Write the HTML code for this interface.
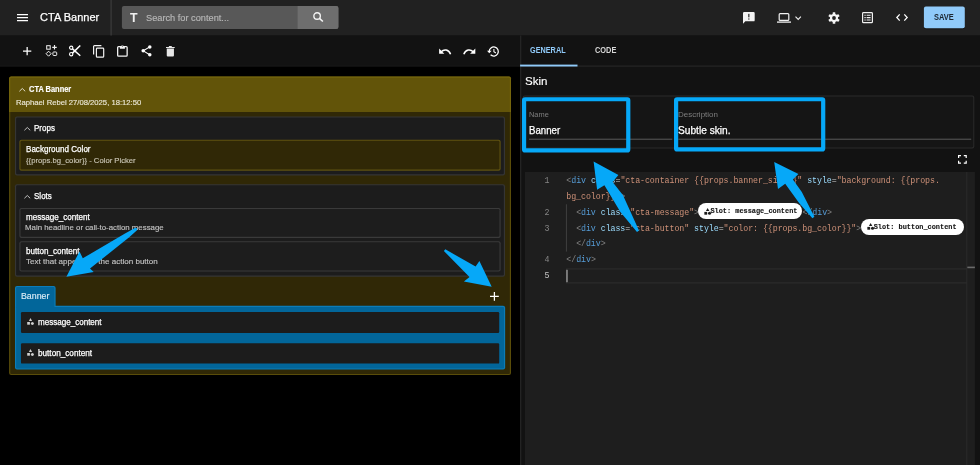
<!DOCTYPE html>
<html lang="en">
<head>
<meta charset="utf-8">
<title>CTA Banner</title>
<style>
*{box-sizing:border-box;margin:0;padding:0}
html,body{width:980px;height:465px;overflow:hidden;background:#121212}
body{position:relative;font-family:"Liberation Sans",sans-serif;color:#fff}
#root{position:absolute;left:0;top:0;width:980px;height:465px;will-change:transform}
.t{position:absolute;white-space:nowrap;line-height:1;transform-origin:0 85%}
svg{position:absolute;overflow:visible}
.code{position:absolute;white-space:pre;font-family:"Liberation Mono",monospace;font-size:8.300px;letter-spacing:-0.065px;line-height:16px;height:16px;color:#d4d4d4}
.code .p{color:#808080}.code .tg{color:#569cd6}.code .a{color:#9cdcfe}.code .s{color:#ce9178}
.pill{position:absolute;background:#fff;border-radius:9px}
.pill span{position:absolute;white-space:nowrap;font-family:"Liberation Mono",monospace;font-weight:bold;font-size:6.92px;line-height:1;color:#141414;-webkit-text-stroke:0.12px #141414}
</style>
</head>
<body>
<div id="root">

<svg style="left:0;top:0" width="980" height="465" viewBox="0 0 980 465">
<rect x="0.00" y="0.00" width="980.00" height="35.55" fill="#212121"/>
<rect x="0.00" y="35.55" width="980.00" height="31.15" fill="#121212"/>
<rect x="0.00" y="65.60" width="520.30" height="1.10" fill="#1b1b1b"/>
<rect x="0.00" y="66.70" width="520.30" height="398.30" fill="#000"/>
<rect x="520.30" y="66.50" width="459.70" height="398.50" fill="#121212"/>
<rect x="110.50" y="0.00" width="1.20" height="35.55" fill="#3c3c3c"/>
<rect x="121.90" y="5.90" width="216.50" height="23.10" rx="2" fill="#585858"/>
<path d="M297.6 5.9h38.8a2 2 0 0 1 2 2v19.1a2 2 0 0 1-2 2h-38.8z" fill="#6e6e6e"/>
<rect x="923.90" y="7.20" width="40.90" height="22.00" rx="2.5" fill="#141414"/>
<rect x="923.90" y="6.60" width="40.90" height="21.70" rx="2" fill="#90caf9"/>
<rect x="520.25" y="35.55" width="1.00" height="429.45" fill="#2b2b2b"/>
<rect x="521.25" y="65.60" width="458.75" height="0.95" fill="#2c2c2c"/>
<rect x="520.10" y="64.60" width="57.40" height="1.90" fill="#90caf9"/>
<rect x="9.10" y="76.50" width="501.90" height="298.60" rx="2" fill="#5a4d09"/>
<rect x="10.25" y="77.65" width="499.60" height="296.30" rx="1" fill="#302806"/>
<path d="M9.1 111.9V78.5a2 2 0 0 1 2-2h497.9a2 2 0 0 1 2 2v33.4z" fill="#75650c"/>
<path d="M10.25 111.9V78.65a1 1 0 0 1 1-1h497.6a1 1 0 0 1 1 1v33.25z" fill="#625409"/>
<rect x="14.95" y="116.45" width="490.05" height="59.05" rx="2" fill="#353535"/><rect x="16.10" y="117.60" width="487.75" height="56.75" rx="1.31" fill="#1c1c1c"/>
<rect x="19.35" y="139.70" width="481.30" height="30.95" rx="2" fill="#5f5210"/><rect x="20.50" y="140.85" width="479.00" height="28.65" rx="1.31" fill="#302806"/>
<rect x="14.95" y="184.20" width="490.05" height="92.55" rx="2" fill="#353535"/><rect x="16.10" y="185.35" width="487.75" height="90.25" rx="1.31" fill="#1c1c1c"/>
<rect x="19.35" y="207.90" width="481.30" height="30.10" rx="2" fill="#3a3a3a"/><rect x="20.50" y="209.05" width="479.00" height="27.80" rx="1.31" fill="#1d1d1d"/>
<rect x="19.35" y="241.20" width="481.30" height="30.40" rx="2" fill="#3a3a3a"/><rect x="20.50" y="242.35" width="479.00" height="28.10" rx="1.31" fill="#1d1d1d"/>
<path d="M15 308V287.9a2 2 0 0 1 2-2h36.6a2 2 0 0 1 2 2V308z" fill="#0b7cb8"/>
<rect x="15.00" y="305.80" width="490.15" height="63.75" rx="2" fill="#0b7cb8"/>
<path d="M16.15 308V288.05a1 1 0 0 1 1-1h36.3a1 1 0 0 1 1 1V308z" fill="#02669a"/>
<rect x="16.15" y="306.95" width="487.85" height="61.45" rx="1" fill="#02669a"/>
<rect x="20.97" y="312.10" width="478.23" height="20.90" rx="1.2" fill="#1c1c1c"/>
<rect x="20.97" y="343.30" width="478.23" height="20.30" rx="1.2" fill="#1c1c1c"/>
<rect x="522.60" y="95.50" width="451.70" height="52.90" rx="2" fill="#2a2a2a"/><rect x="523.60" y="96.50" width="449.70" height="50.90" rx="1.4" fill="#151515"/>
<rect x="529.00" y="138.70" width="143.30" height="1.00" fill="#5a5a5a"/>
<rect x="678.40" y="138.70" width="292.80" height="1.00" fill="#5a5a5a"/>
<rect x="525.00" y="172.00" width="449.90" height="293.00" fill="#1e1e1e"/>
<rect x="966.40" y="172.00" width="0.90" height="293.00" fill="#2d2d2d"/>
<rect x="566.00" y="268.40" width="400.90" height="15.00" fill="#2e2e2e"/>
<rect x="567.00" y="269.40" width="399.40" height="13.00" fill="#1e1e1e"/>
<rect x="967.30" y="266.60" width="7.60" height="1.60" fill="#6a6a6a"/>
<rect x="565.90" y="204.30" width="1.00" height="47.30" fill="#404040"/>
<rect x="566.50" y="269.80" width="1.00" height="12.40" fill="#c8c8c8"/>
</svg>
<!-- APP BAR -->
<svg style="left:16.5px;top:14px" width="11" height="7.4" viewBox="0 0 11 7.4"><path d="M0 0.65h11M0 3.7h11M0 6.75h11" stroke="#fff" stroke-width="1.25" fill="none"/></svg>
<svg style="left:312.7px;top:11.9px" width="10.4" height="10" viewBox="0 0 10.4 10"><circle cx="4.1" cy="4" r="3.25" stroke="#f4f4f4" stroke-width="1.35" fill="none"/><path d="M6.5 6.3L9.9 9.5" stroke="#f4f4f4" stroke-width="1.6"/></svg>

<svg style="left:742.6px;top:11.6px" width="11.7" height="11.7" viewBox="0 0 12 12"><path d="M1.2 0h9.6a1.2 1.2 0 0 1 1.2 1.2v7.2a1.2 1.2 0 0 1-1.2 1.2H2.4L0 12V1.2a1.2 1.2 0 0 1 1.2-1.2z" fill="#f2f2f2"/><rect x="5.4" y="1.9" width="1.2" height="3.6" fill="#212121"/><rect x="5.4" y="6.6" width="1.2" height="1.2" fill="#212121"/></svg>
<svg style="left:777.2px;top:12.9px" width="14" height="10" viewBox="0 0 14 10"><rect x="2.2" y="0.6" width="9.6" height="6.8" rx="0.9" stroke="#f2f2f2" stroke-width="1.2" fill="none"/><path d="M0 9.1h14" stroke="#f2f2f2" stroke-width="1.3"/></svg>
<svg style="left:795px;top:15.9px" width="6.4" height="4.3" viewBox="0 0 6.4 4.3"><path d="M0.5 0.6L3.2 3.4L5.9 0.6" stroke="#f2f2f2" stroke-width="1.1" fill="none"/></svg>
<svg style="left:827.5px;top:11.6px" width="12" height="12" viewBox="0 0 12 12"><g fill="#f5f5f5"><circle cx="6" cy="6" r="4.1"/><rect x="4.7" y="0.2" width="2.6" height="11.6" rx="0.5"/><rect x="4.7" y="0.2" width="2.6" height="11.6" rx="0.5" transform="rotate(60 6 6)"/><rect x="4.7" y="0.2" width="2.6" height="11.6" rx="0.5" transform="rotate(120 6 6)"/></g><circle cx="6" cy="6" r="1.9" fill="#212121"/></svg>
<svg style="left:862.3px;top:11.9px" width="11" height="11.3" viewBox="0 0 11 11.3"><rect x="0.6" y="0.6" width="9.8" height="10.1" rx="0.9" stroke="#f2f2f2" stroke-width="1.2" fill="none"/><path d="M2.4 3.3h1.3M4.6 3.3h4M2.4 5.65h1.3M4.6 5.65h4M2.4 8h1.3M4.6 8h4" stroke="#f2f2f2" stroke-width="1.1"/></svg>
<svg style="left:895.8px;top:14.3px" width="12" height="7" viewBox="0 0 12 7"><path d="M3.7 0.4L0.8 3.5L3.7 6.6M8.3 0.4L11.2 3.5L8.3 6.6" stroke="#fff" stroke-width="1.25" fill="none"/></svg>

<!-- TOOLBAR ICONS -->
<svg style="left:23px;top:47px" width="8.3" height="8.3" viewBox="0 0 8.3 8.3"><path d="M4.15 0v8.3M0 4.15h8.3" stroke="#fff" stroke-width="1.25"/></svg>
<svg style="left:45.9px;top:45.2px" width="11.4" height="11.2" viewBox="0 0 11.4 11.2"><rect x="0.7" y="0.7" width="3.5" height="3.5" stroke="#f2f2f2" stroke-width="1" fill="none"/><rect x="6.9" y="7" width="3.8" height="3.5" rx="0.8" stroke="#f2f2f2" stroke-width="1" fill="none"/><path d="M2.6 6.2L5.1 8.7L2.6 11.2L0.1 8.7z" stroke="#f2f2f2" stroke-width="1" fill="none"/><path d="M8.5 0.1v4.5M6.25 2.35h4.5" stroke="#f2f2f2" stroke-width="1.15"/></svg>
<svg style="left:68.9px;top:45.2px" width="11.6" height="11.4" viewBox="0 0 11.6 11.4"><circle cx="2.2" cy="2.8" r="1.65" stroke="#fff" stroke-width="1.15" fill="none"/><circle cx="2.2" cy="9.2" r="1.65" stroke="#fff" stroke-width="1.15" fill="none"/><path d="M3.5 3.9L11.3 10.7M3.5 8.1L11.3 0.5" stroke="#fff" stroke-width="1.5"/></svg>
<svg style="left:92.8px;top:44.5px" width="11.3" height="12.7" viewBox="0 0 11.3 12.7"><rect x="3.4" y="3.1" width="7.3" height="9" rx="0.9" stroke="#f2f2f2" stroke-width="1.2" fill="none"/><path d="M0.6 9.6V1.5a0.9 0.9 0 0 1 0.9-0.9h6.9" stroke="#f2f2f2" stroke-width="1.2" fill="none"/></svg>
<svg style="left:117.2px;top:44px" width="10.8" height="12.9" viewBox="0 0 10.8 12.9"><rect x="0.65" y="2.6" width="9.5" height="9.6" rx="0.9" stroke="#f2f2f2" stroke-width="1.3" fill="none"/><path d="M2.9 2.1h1.3a1.25 1.25 0 0 1 2.4 0h1.3v2.6H2.9z" fill="#f2f2f2"/><circle cx="5.4" cy="2" r="0.55" fill="#121212"/></svg>
<svg style="left:140.7px;top:45.2px" width="11" height="11.7" viewBox="0 0 11 11.7"><path d="M8.7 1.9L2.3 5.85L8.7 9.8" stroke="#fff" stroke-width="1.1" fill="none"/><circle cx="8.8" cy="1.9" r="1.75" fill="#fff"/><circle cx="2.2" cy="5.85" r="1.75" fill="#fff"/><circle cx="8.8" cy="9.8" r="1.75" fill="#fff"/></svg>
<svg style="left:165.9px;top:45.7px" width="8.7" height="10.4" viewBox="0 0 8.7 10.4"><path d="M0.75 2.6h7.2v6.8a1 1 0 0 1-1 1H1.75a1 1 0 0 1-1-1z" fill="#e6e6e6"/><path d="M0 0.9h8.7v1.1H0z M2.9 0h2.9v1.1H2.9z" fill="#e6e6e6"/></svg>
<svg style="left:439px;top:47.5px" width="12.4" height="6.8" viewBox="0 0 12.4 6.8"><path d="M2.2 3.7C5 0.9 9.6 1.3 11.6 6.2" stroke="#fff" stroke-width="1.5" fill="none"/><path d="M0.1 0.5v5.2h5.2z" fill="#fff"/></svg>
<svg style="left:462.7px;top:47.5px" width="12.4" height="6.8" viewBox="0 0 12.4 6.8"><path d="M10.2 3.7C7.4 0.9 2.8 1.3 0.8 6.2" stroke="#fff" stroke-width="1.5" fill="none"/><path d="M12.3 0.5v5.2H7.1z" fill="#fff"/></svg>
<svg style="left:486.9px;top:45.5px" width="12.3" height="11" viewBox="0 0 12.3 11"><path d="M2.2 5.5a4.55 4.55 0 1 1 1.4 3.3" stroke="#fff" stroke-width="1.25" fill="none"/><path d="M0 4.7h4.6L2.3 7.3z" fill="#fff"/><path d="M6.9 3v2.8l2 1.2" stroke="#fff" stroke-width="1.05" fill="none"/></svg>

<!-- TABS -->

<!-- LEFT TREE -->
<svg style="left:18.9px;top:87.6px" width="6.6" height="3.6" viewBox="0 0 6.6 3.6"><path d="M0.4 3.3L3.3 0.5L6.2 3.3" stroke="#e8e4d0" stroke-width="0.95" fill="none"/></svg>

<svg style="left:24px;top:127px" width="6.6" height="3.6" viewBox="0 0 6.6 3.6"><path d="M0.4 3.3L3.3 0.5L6.2 3.3" stroke="#c8c8c8" stroke-width="0.95" fill="none"/></svg>

<svg style="left:24px;top:195px" width="6.6" height="3.6" viewBox="0 0 6.6 3.6"><path d="M0.4 3.3L3.3 0.5L6.2 3.3" stroke="#c8c8c8" stroke-width="0.95" fill="none"/></svg>

<svg style="left:27.2px;top:318.4px" width="7" height="7.2" viewBox="0 0 7 7.2"><path d="M3.5 0.1L5.1 3H1.9z" fill="#cfcfcf"/><rect x="0.2" y="4" width="2.7" height="2.7" fill="#cfcfcf"/><circle cx="5.4" cy="5.4" r="1.5" fill="#cfcfcf"/></svg>
<svg style="left:27.2px;top:349.2px" width="7" height="7.2" viewBox="0 0 7 7.2"><path d="M3.5 0.1L5.1 3H1.9z" fill="#cfcfcf"/><rect x="0.2" y="4" width="2.7" height="2.7" fill="#cfcfcf"/><circle cx="5.4" cy="5.4" r="1.5" fill="#cfcfcf"/></svg>
<svg style="left:490.4px;top:292px" width="8.8" height="8.8" viewBox="0 0 8.8 8.8"><path d="M4.4 0v8.8M0 4.4h8.8" stroke="#fff" stroke-width="1.25"/></svg>

<!-- RIGHT PANEL -->
<svg style="left:958.3px;top:155.4px" width="8.8" height="8.8" viewBox="0 0 8.8 8.8"><path d="M0.6 3V0.6H3M5.8 0.6h2.4V3M8.2 5.8v2.4H5.8M3 8.2H0.6V5.8" stroke="#fff" stroke-width="1.2" fill="none"/></svg>

<!-- CODE EDITOR -->
<div class="code" style="left:544.40px;top:172.82px;color:#858585">1</div>
<div class="code" style="left:544.40px;top:204.52px;color:#858585">2</div>
<div class="code" style="left:544.40px;top:220.82px;color:#858585">3</div>
<div class="code" style="left:544.40px;top:251.92px;color:#858585">4</div>
<div class="code" style="left:544.40px;top:267.72px;color:#c6c6c6">5</div>
<div class="code" style="left:566.30px;top:172.82px"><span class="p">&lt;</span><span class="tg">div</span> <span class="a">class</span>=<span class="s">"cta-container {{props.banner_size}}"</span> <span class="a">style</span>=<span class="s">"background: {{props.</span></div>
<div class="code" style="left:566.30px;top:188.62px"><span class="s">bg_color}}"</span><span class="p">&gt;</span></div>
<div class="code" style="left:566.30px;top:204.52px">  <span class="p">&lt;</span><span class="tg">div</span> <span class="a">class</span>=<span class="s">"cta-message"</span><span class="p">&gt;</span></div>
<div class="code" style="left:802.50px;top:204.52px"><span class="p">&lt;/</span><span class="tg">div</span><span class="p">&gt;</span></div>
<div class="code" style="left:566.30px;top:220.82px">  <span class="p">&lt;</span><span class="tg">div</span> <span class="a">class</span>=<span class="s">"cta-button"</span> <span class="a">style</span>=<span class="s">"color: {{props.bg_color}}"</span><span class="p">&gt;</span></div>
<div class="code" style="left:566.30px;top:236.12px">  <span class="p">&lt;/</span><span class="tg">div</span><span class="p">&gt;</span></div>
<div class="code" style="left:566.30px;top:251.92px"><span class="p">&lt;/</span><span class="tg">div</span><span class="p">&gt;</span></div>
<div class="pill" style="left:698.4px;top:202.9px;width:103.6px;height:16.1px"><span style="left:12.0px;top:5.49px">Slot: message_content</span></div><svg style="left:704.1px;top:207.8px" width="7.3" height="7" viewBox="0 0 7 7"><path d="M3.5 0L5.2 2.9H1.8z" fill="#1c1c1c"/><rect x="0.2" y="3.9" width="2.8" height="2.8" fill="#1c1c1c"/><circle cx="5.4" cy="5.3" r="1.55" fill="#1c1c1c"/></svg>
<div class="pill" style="left:860.5px;top:218.7px;width:103.5px;height:16.2px"><span style="left:13.2px;top:4.89px">Slot: button_content</span></div><svg style="left:867.4px;top:223.0px" width="7.3" height="7" viewBox="0 0 7 7"><path d="M3.5 0L5.2 2.9H1.8z" fill="#1c1c1c"/><rect x="0.2" y="3.9" width="2.8" height="2.8" fill="#1c1c1c"/><circle cx="5.4" cy="5.3" r="1.55" fill="#1c1c1c"/></svg>

<div class="t" style="left:39.56px;top:12.35px;font-size:11.4px;color:#fff;-webkit-text-stroke:0.25px currentColor;transform:scale(0.9682,1)">CTA Banner</div>
<div class="t" style="left:130.25px;top:11.84px;font-size:12px;color:#f0f0f0;font-weight:bold;transform:scale(1.0265,1)">T</div>
<div class="t" style="left:145.58px;top:14.13px;font-size:9.3px;color:#b8b8b8;-webkit-text-stroke:0.14px currentColor;transform:scale(0.9921,1)">Search for content...</div>
<div class="t" style="left:934.15px;top:14.06px;font-size:8.2px;color:#1c2630;font-weight:bold;transform:scale(0.9113,1)">SAVE</div>
<div class="t" style="left:530.45px;top:47.06px;font-size:8.2px;color:#90caf9;font-weight:bold;transform:scale(0.8887,1)">GENERAL</div>
<div class="t" style="left:595.18px;top:47.06px;font-size:8.2px;color:#d6d6d6;font-weight:bold;transform:scale(0.9042,1)">CODE</div>
<div class="t" style="left:28.60px;top:86.06px;font-size:8.2px;color:#fff;font-weight:bold;-webkit-text-stroke:0.15px currentColor;transform:scale(0.9105,1)">CTA Banner</div>
<div class="t" style="left:15.62px;top:98.57px;font-size:7.6px;color:#ebe7d6;-webkit-text-stroke:0.14px currentColor;transform:scale(1.0086,1)">Raphael Rebel 27/08/2025, 18:12:50</div>
<div class="t" style="left:34.30px;top:123.97px;font-size:8.3px;color:#fff;-webkit-text-stroke:0.25px currentColor;transform:scale(0.9652,1)">Props</div>
<div class="t" style="left:25.85px;top:144.97px;font-size:8.3px;color:#fff;-webkit-text-stroke:0.25px currentColor;transform:scale(0.9721,1)">Background Color</div>
<div class="t" style="left:25.64px;top:156.57px;font-size:7.6px;color:#c9c5b5;-webkit-text-stroke:0.14px currentColor;transform:scale(1.0110,1)">{{props.bg_color}} - Color Picker</div>
<div class="t" style="left:34.43px;top:191.97px;font-size:8.3px;color:#fff;-webkit-text-stroke:0.25px currentColor;transform:scale(0.9659,1)">Slots</div>
<div class="t" style="left:26.05px;top:212.97px;font-size:8.3px;color:#fff;-webkit-text-stroke:0.25px currentColor;transform:scale(0.9742,1)">message_content</div>
<div class="t" style="left:25.20px;top:223.57px;font-size:7.6px;color:#c2c2c2;-webkit-text-stroke:0.14px currentColor;transform:scale(1.0329,1)">Main headline or call-to-action message</div>
<div class="t" style="left:25.64px;top:246.97px;font-size:8.3px;color:#fff;-webkit-text-stroke:0.25px currentColor;transform:scale(0.9762,1)">button_content</div>
<div class="t" style="left:25.78px;top:257.57px;font-size:7.6px;color:#c2c2c2;-webkit-text-stroke:0.14px currentColor;transform:scale(1.0580,1)">Text that appears in the action button</div>
<div class="t" style="left:21.31px;top:292.30px;font-size:9.1px;color:#dcecf6;-webkit-text-stroke:0.14px currentColor;transform:scale(0.9662,1)">Banner</div>
<div class="t" style="left:38.05px;top:317.97px;font-size:8.3px;color:#fff;-webkit-text-stroke:0.25px currentColor;transform:scale(0.9705,1)">message_content</div>
<div class="t" style="left:38.08px;top:348.97px;font-size:8.3px;color:#fff;-webkit-text-stroke:0.25px currentColor;transform:scale(0.9849,1)">button_content</div>
<div class="t" style="left:524.69px;top:76.27px;font-size:11.5px;color:#fff;-webkit-text-stroke:0.14px currentColor;transform:scale(1.0042,1)">Skin</div>
<div class="t" style="left:529.21px;top:110.65px;font-size:7.5px;color:#7e7e7e;transform:scale(0.9909,1)">Name</div>
<div class="t" style="left:529.36px;top:125.53px;font-size:10px;color:#fff;-webkit-text-stroke:0.25px currentColor;transform:scale(0.9646,1)">Banner</div>
<div class="t" style="left:678.38px;top:110.65px;font-size:7.5px;color:#7e7e7e;transform:scale(1.0657,1)">Description</div>
<div class="t" style="left:678.08px;top:125.53px;font-size:10px;color:#fff;-webkit-text-stroke:0.25px currentColor;transform:scale(1.0168,1)">Subtle skin.</div>
<!-- ARROWS -->
<svg style="left:0;top:0" width="980" height="465" viewBox="0 0 980 465">
<rect x="524.07" y="99.26" width="104.2" height="51.2" rx="1" fill="none" stroke="#06a8f8" stroke-width="4.2"/>
<rect x="676.1" y="99.26" width="147.1" height="50.15" rx="1" fill="none" stroke="#06a8f8" stroke-width="4.2"/>
<g fill="#06a8f8">
<polygon points="135.4,227.8 124.6,233.8 82.8,258.3 79.5,251.5 66.4,276.7 93.7,272.1 90,268.6 129.5,237 137,230.2 137.2,228.6"/>
<polygon points="445.3,249.3 475.6,266.6 479.4,260.9 491.7,286.7 463.9,281.4 469.5,276.9 443.9,251"/>
<polygon points="593.6,161.6 618.4,175.1 612.6,181.9 623,195.3 639,230.4 637,231.9 620.4,211.9 604.4,185.2 597.1,189.7"/>
<polygon points="774.2,162 798.4,174 792.9,179.4 801.8,192 814.4,216.8 812.4,218.2 799.1,203 785.2,183.7 778,189.1"/>
</g>
</svg>
</div>
</body>
</html>
